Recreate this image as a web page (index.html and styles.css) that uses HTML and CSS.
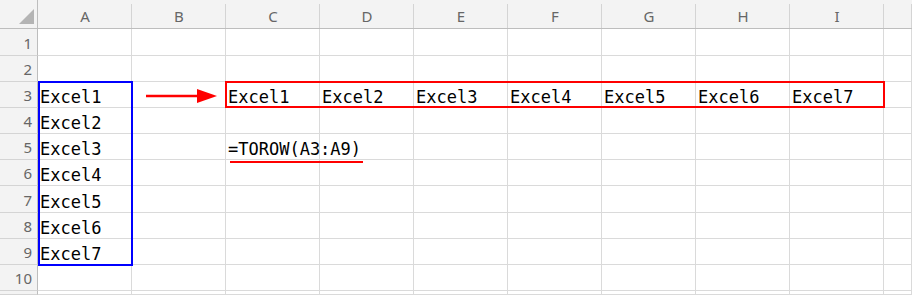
FILE: index.html
```html
<!DOCTYPE html>
<html lang="en">
<head>
<meta charset="utf-8">
<title>TOROW</title>
<link rel="stylesheet" href="styles.css">
</head>
<body>
<div class="sheet">
  <div class="row head">
    <div class="corner"><span class="tri"></span></div>
    <div class="ch">A</div><div class="ch">B</div><div class="ch">C</div><div class="ch">D</div><div class="ch">E</div><div class="ch">F</div><div class="ch">G</div><div class="ch">H</div><div class="ch">I</div><div class="ch"></div>
  </div>
  <div class="row tall">
    <div class="rh">1</div>
    <div class="c"></div><div class="c"></div><div class="c"></div><div class="c"></div><div class="c"></div><div class="c"></div><div class="c"></div><div class="c"></div><div class="c"></div><div class="c"></div>
  </div>
  <div class="row">
    <div class="rh">2</div>
    <div class="c"></div><div class="c"></div><div class="c"></div><div class="c"></div><div class="c"></div><div class="c"></div><div class="c"></div><div class="c"></div><div class="c"></div><div class="c"></div>
  </div>
  <div class="row">
    <div class="rh">3</div>
    <div class="c">Excel1</div><div class="c"></div><div class="c">Excel1</div><div class="c">Excel2</div><div class="c">Excel3</div><div class="c">Excel4</div><div class="c">Excel5</div><div class="c">Excel6</div><div class="c">Excel7</div><div class="c"></div>
  </div>
  <div class="row">
    <div class="rh">4</div>
    <div class="c">Excel2</div><div class="c"></div><div class="c"></div><div class="c"></div><div class="c"></div><div class="c"></div><div class="c"></div><div class="c"></div><div class="c"></div><div class="c"></div>
  </div>
  <div class="row">
    <div class="rh">5</div>
    <div class="c">Excel3</div><div class="c"></div><div class="c over">=TOROW(A3:A9)</div><div class="c"></div><div class="c"></div><div class="c"></div><div class="c"></div><div class="c"></div><div class="c"></div><div class="c"></div>
  </div>
  <div class="row">
    <div class="rh">6</div>
    <div class="c">Excel4</div><div class="c"></div><div class="c"></div><div class="c"></div><div class="c"></div><div class="c"></div><div class="c"></div><div class="c"></div><div class="c"></div><div class="c"></div>
  </div>
  <div class="row tall">
    <div class="rh">7</div>
    <div class="c">Excel5</div><div class="c"></div><div class="c"></div><div class="c"></div><div class="c"></div><div class="c"></div><div class="c"></div><div class="c"></div><div class="c"></div><div class="c"></div>
  </div>
  <div class="row">
    <div class="rh">8</div>
    <div class="c">Excel6</div><div class="c"></div><div class="c"></div><div class="c"></div><div class="c"></div><div class="c"></div><div class="c"></div><div class="c"></div><div class="c"></div><div class="c"></div>
  </div>
  <div class="row">
    <div class="rh">9</div>
    <div class="c">Excel7</div><div class="c"></div><div class="c"></div><div class="c"></div><div class="c"></div><div class="c"></div><div class="c"></div><div class="c"></div><div class="c"></div><div class="c"></div>
  </div>
  <div class="row">
    <div class="rh">10</div>
    <div class="c"></div><div class="c"></div><div class="c"></div><div class="c"></div><div class="c"></div><div class="c"></div><div class="c"></div><div class="c"></div><div class="c"></div><div class="c"></div>
  </div>
  <div class="row last">
    <div class="rh"></div>
    <div class="c"></div><div class="c"></div><div class="c"></div><div class="c"></div><div class="c"></div><div class="c"></div><div class="c"></div><div class="c"></div><div class="c"></div><div class="c"></div>
  </div>

  <div class="box blue-box"></div>
  <div class="box red-box"></div>
  <svg class="arrow" width="72" height="16" viewBox="0 0 72 16">
    <line x1="0" y1="8" x2="53" y2="8" stroke="#ff0000" stroke-width="2.4"/>
    <polygon points="51,1 71,8 51,15" fill="#ff0000"/>
  </svg>
  <div class="underline"></div>
</div>
</body>
</html>
```
FILE: styles.css
```css
html, body {
  margin: 0;
  padding: 0;
  background: #ffffff;
}

.sheet {
  position: relative;
  width: 912px;
  height: 295px;
  overflow: hidden;
  display: flex;
  flex-direction: column;
}

.row {
  display: grid;
  grid-template-columns: 38px repeat(9, 94px) 1fr;
  height: 26px;
  flex: none;
}

.row.tall { height: 27px; }
.row.head { height: 29px; }
.row.last { flex: 1; height: auto; }

.corner {
  background: #f3f3f3;
  border-right: 1px solid #bdbdbd;
  border-bottom: 1px solid #bdbdbd;
  display: flex;
  justify-content: flex-end;
  align-items: flex-start;
  padding: 9px 3px 0 0;
}

.tri {
  width: 0;
  height: 0;
  border-left: 15px solid transparent;
  border-bottom: 15px solid #b4b4b4;
}

.ch {
  background-color: #f3f3f3;
  background-image: linear-gradient(to left, #d4d4d4 1px, transparent 1px);
  background-size: 100% calc(100% - 4px);
  background-position: bottom;
  background-repeat: no-repeat;
  border-bottom: 1px solid #bdbdbd;
  display: flex;
  align-items: center;
  justify-content: center;
  padding-top: 4px;
  font-family: "Noto Sans", "Open Sans", sans-serif;
  font-size: 15px;
  line-height: 20px;
  color: #666666;
}

.rh {
  background: #f3f3f3;
  border-right: 1px solid #bdbdbd;
  border-bottom: 1px solid #d4d4d4;
  display: flex;
  align-items: flex-end;
  justify-content: flex-end;
  padding: 0 5px 2px 0;
  font-family: "Noto Sans", "Open Sans", sans-serif;
  font-size: 15px;
  line-height: 20px;
  color: #666666;
}

.c {
  border-right: 1px solid #dadada;
  border-bottom: 1px solid #dadada;
  display: flex;
  align-items: flex-end;
  padding-left: 2px;
  font-family: "DejaVu Sans Mono", "Liberation Mono", monospace;
  font-size: 17px;
  line-height: 20px;
  color: #000000;
  white-space: nowrap;
  min-width: 0;
}

.c.over {
  overflow: visible;
  position: relative;
  z-index: 1;
}

.box {
  position: absolute;
  box-sizing: border-box;
  border: 2px solid;
  pointer-events: none;
}

.blue-box {
  left: 38px;
  top: 81px;
  width: 95px;
  height: 185px;
  border-color: #0000ff;
}

.red-box {
  left: 225px;
  top: 81px;
  width: 660px;
  height: 27px;
  border-color: #ff0000;
}

.arrow {
  position: absolute;
  left: 146px;
  top: 88px;
}

.underline {
  position: absolute;
  left: 230px;
  top: 161px;
  width: 133px;
  height: 2px;
  background: #ff0000;
}
```
